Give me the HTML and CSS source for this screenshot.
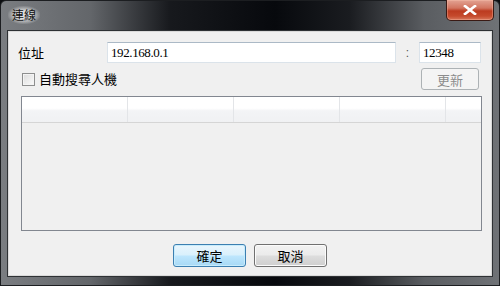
FILE: index.html
```html
<!DOCTYPE html>
<html lang="zh-Hant">
<head>
    <meta charset="UTF-8">
    <title>連線</title>
    <link rel="stylesheet" href="styles.css">
</head>
<body>
    <div class="window">
        <div class="titlebar">
            <span class="title">連線</span>
            <button class="close-btn" aria-label="close">
                <svg width="14" height="10" viewBox="0 0 14 10">
                    <path d="M2 1 L12 9 M12 1 L2 9" stroke="#ffffff" stroke-width="2.6" stroke-linecap="square"/>
                </svg>
            </button>
        </div>

        <div class="client">
            <div class="row addr-row">
                <label class="field-label">位址</label>
                <input type="text" class="textbox addr-input" value="192.168.0.1">
                <span class="colon">:</span>
                <input type="text" class="textbox port-input" value="12348">
            </div>

            <div class="row search-row">
                <span class="checkbox"></span>
                <span class="check-label">自動搜尋人機</span>
                <button class="btn btn-disabled refresh-btn">更新</button>
            </div>

            <div class="listview">
                <div class="list-header">
                    <div class="col"></div>
                    <div class="col"></div>
                    <div class="col"></div>
                    <div class="col"></div>
                    <div class="col col-last"></div>
                </div>
            </div>

            <div class="button-row">
                <button class="btn btn-default">確定</button>
                <button class="btn">取消</button>
            </div>
        </div>
    </div>
</body>
</html>
```

FILE: styles.css
```css
html, body {
    margin: 0;
    padding: 0;
    width: 500px;
    height: 286px;
    overflow: hidden;
    background-color: #0b0d10;
}

.window {
    width: 500px;
    height: 286px;
    box-sizing: border-box;
    display: flex;
    flex-direction: column;
    border: 1px solid #1c1e21;
    border-radius: 6px 6px 0 0;
    background: linear-gradient(90deg, #7a7d81 0%, #63666a 18%, #17191d 34%, #07090d 55%, #1a1c20 70%, #5a5d61 85%, #6f7276 100%);
    font-family: "Noto Sans CJK TC", "Liberation Sans", sans-serif;
    font-size: 13px;
    color: #000;
}

.titlebar {
    height: 29px;
    display: flex;
    align-items: flex-start;
    flex-shrink: 0;
}

.title {
    margin: 5px 0 0 7px;
    padding: 0 4px;
    font-size: 12px;
    line-height: 18px;
    color: #101010;
    background: radial-gradient(ellipse at center, rgba(240, 240, 240, 0.85) 30%, rgba(200, 200, 200, 0) 75%);
}

.close-btn {
    margin: -1px 5px 0 auto;
    width: 48px;
    height: 21px;
    padding: 0;
    border: 1px solid #3a1a14;
    border-top: none;
    border-radius: 0 0 5px 5px;
    background: linear-gradient(180deg, #e3a393 0%, #d27560 40%, #bc3b20 55%, #c54a2c 80%, #d8785c 100%);
    box-shadow: inset 0 0 0 1px rgba(255, 200, 180, 0.35);
    display: flex;
    align-items: center;
    justify-content: center;
}

.client {
    margin: 0 6px 8px 6px;
    flex: 1;
    background-color: #f0f0f0;
    border: 1px solid #2e3134;
    box-shadow: inset 0 0 0 1px #dadada;
    padding: 11px 0 0 10px;
    display: flex;
    flex-direction: column;
}

.row {
    display: flex;
    align-items: center;
}

.addr-row {
    height: 21px;
}

.field-label {
    width: 89px;
    line-height: 18px;
}

.textbox {
    box-sizing: border-box;
    height: 21px;
    margin: 0;
    padding: 0 3px;
    border: 1px solid #dbe3ea;
    border-top-color: #abb9c6;
    background-color: #fff;
    font-family: "Liberation Serif", serif;
    font-size: 13px;
    letter-spacing: -0.4px;
    color: #000;
    outline: none;
}

.addr-input {
    width: 289px;
}

.colon {
    width: 23px;
    text-align: center;
    font-size: 12px;
    color: #555;
    font-family: "Liberation Sans", sans-serif;
}

.port-input {
    width: 62px;
}

.search-row {
    margin-top: 5px;
    height: 22px;
}

.checkbox {
    box-sizing: border-box;
    width: 13px;
    height: 13px;
    margin-left: 4px;
    border: 1px solid #8e8f8f;
    background: linear-gradient(135deg, #dcdcdc, #fbfbfb);
    box-shadow: inset 0 0 0 1px #f4f4f4;
}

.check-label {
    margin-left: 4px;
    line-height: 18px;
}

.btn {
    box-sizing: border-box;
    width: 73px;
    height: 23px;
    padding: 0;
    border: 1px solid #707070;
    border-radius: 3px;
    background: linear-gradient(180deg, #f2f2f2 0%, #ebebeb 48%, #dddddd 52%, #cfcfcf 100%);
    box-shadow: inset 0 0 0 1px #fbfbfb;
    font-family: "Noto Sans CJK TC", sans-serif;
    font-size: 13px;
    color: #000;
}

.btn-default {
    border-color: #3c7fb1;
    background: linear-gradient(180deg, #eaf6fd 0%, #d9f0fc 48%, #bee6fd 52%, #a7d9f5 100%);
    box-shadow: inset 0 0 0 1px #c8ecfc;
}

.btn-disabled {
    color: #8c8c8c;
    border-color: #adb2b5;
    background: #f4f4f4;
    box-shadow: none;
}

.refresh-btn {
    margin-left: auto;
    margin-right: 13px;
    width: 58px;
    height: 22px;
}

.listview {
    margin: 6px 0 0 3px;
    width: 461px;
    height: 135px;
    box-sizing: border-box;
    border: 1px solid #828790;
    background-color: #f0f0f0;
}

.list-header {
    display: flex;
    height: 25px;
    border-bottom: 1px solid #d5d5d5;
    background: linear-gradient(180deg, #ffffff 0%, #ffffff 45%, #f3f4f6 55%, #f0f1f3 100%);
}

.col {
    width: 105px;
    border-right: 1px solid #e3e5e8;
}

.col-last {
    flex: 1;
    border-right: none;
}

.button-row {
    margin: 13px 0 0 -10px;
    display: flex;
    justify-content: center;
    gap: 8px;
}
```
